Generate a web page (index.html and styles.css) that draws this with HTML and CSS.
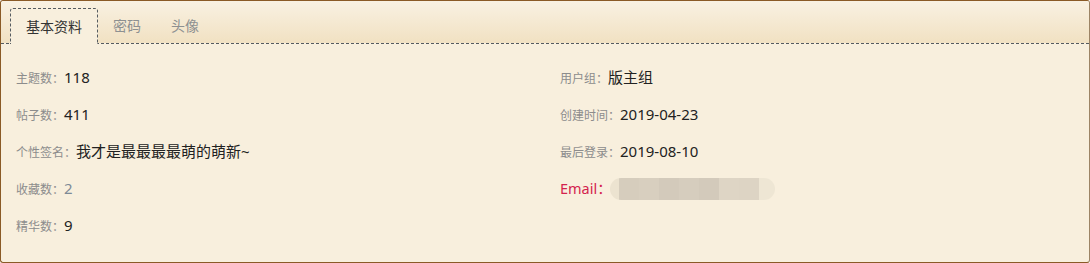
FILE: index.html
```html
<!DOCTYPE html>
<html lang="zh-CN">
<head>
<meta charset="utf-8">
<title>个人资料</title>
<link rel="stylesheet" href="styles.css">
</head>
<body>
<div class="panel">
  <div class="tabs">
    <div class="tab active">基本资料</div>
    <div class="tab">密码</div>
    <div class="tab">头像</div>
  </div>
  <div class="content">
    <div class="col">
      <div class="row"><span class="label">主题数：</span><span class="value">118</span></div>
      <div class="row"><span class="label">帖子数：</span><span class="value">411</span></div>
      <div class="row"><span class="label">个性签名：</span><span class="value">我才是最最最最萌的萌新~</span></div>
      <div class="row"><span class="label">收藏数：</span><span class="value muted">2</span></div>
      <div class="row"><span class="label">精华数：</span><span class="value">9</span></div>
    </div>
    <div class="col">
      <div class="row"><span class="label">用户组：</span><span class="value">版主组</span></div>
      <div class="row"><span class="label">创建时间：</span><span class="value">2019-04-23</span></div>
      <div class="row"><span class="label">最后登录：</span><span class="value">2019-08-10</span></div>
      <div class="row"><span class="email-label">Email：</span><span class="blur"><i class="b1"></i><i class="b2"></i><i class="b3"></i><i class="b4"></i><i class="b5"></i><i class="b6"></i><i class="b7"></i><i class="b8"></i><i class="b9"></i></span></div>
    </div>
  </div>
</div>
</body>
</html>
```

FILE: styles.css
```css
* { box-sizing: border-box; }
html, body { margin: 0; padding: 0; }
body {
  width: 1090px;
  height: 263px;
  background: #ffffff;
  font-family: "Noto Sans", "Noto Sans CJK SC", sans-serif;
}
.panel {
  width: 1090px;
  height: 263px;
  border: 1px solid #8a5a26;
  border-right-color: #9c8465;
  border-radius: 3px;
  background: #f8efdd;
  overflow: hidden;
}
.tabs {
  height: 43px;
  display: flex;
  align-items: flex-end;
  padding-left: 9px;
  background: linear-gradient(to bottom, #f9f1e2 0%, #f1e1c2 100%);
  border-bottom: 1px dashed #555b60;
}
.tab {
  height: 35px;
  line-height: 35px;
  padding: 0 16px;
  font-size: 14px;
  color: #8d9091;
}
.tab:nth-child(2) { padding-left: 0; padding-right: 0; }
.tab:nth-child(3) { padding-left: 30px; }
.tab.active {
  color: #333333;
  background: #f8efdd;
  border: 1px dashed #555b60;
  border-bottom: none;
  border-radius: 3px 3px 0 0;
  height: 36px;
  margin-bottom: -1px;
  padding: 0 15px;
  width: 88px;
  margin-right: 15px;
}
.content {
  display: flex;
  padding: 14px 0 0 0;
}
.col {
  width: 50%;
  padding-left: 15px;
}
.row {
  height: 37px;
  display: flex;
  align-items: center;
}
.label {
  font-size: 12px;
  color: #8c8c8c;
  padding-top: 2px;
}
.value {
  font-size: 15px;
  color: #222222;
}
.value.muted { color: #7d8a96; }
.email-label {
  font-size: 14.5px;
  color: #d4234d;
  margin-right: -2px;
}
.blur {
  display: flex;
  height: 22px;
  border-radius: 11px;
  overflow: hidden;
  margin-top: 2px;
}
.blur i { display: block; height: 22px; }
.b1 { width: 9px; background: #ece3d0; }
.b2 { width: 20px; background: #d6cdbd; }
.b3 { width: 20px; background: #d8cfbf; }
.b4 { width: 20px; background: #d3cabb; }
.b5 { width: 20px; background: #d6cdbe; }
.b6 { width: 20px; background: #d3cabb; }
.b7 { width: 20px; background: #ded5c5; }
.b8 { width: 20px; background: #ddd4c4; }
.b9 { width: 16px; background: #eee6d4; }
```
